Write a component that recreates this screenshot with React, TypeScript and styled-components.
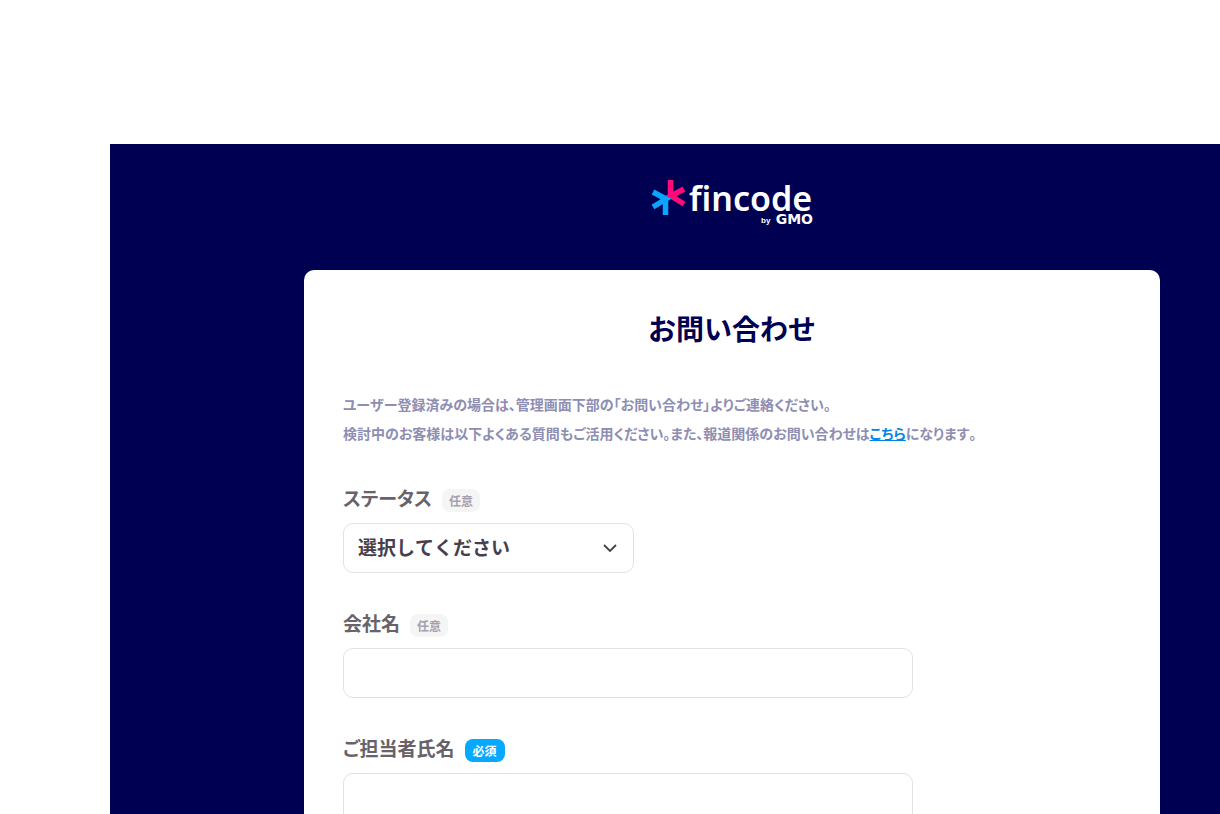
import React from "react";
import styled, { createGlobalStyle } from "styled-components";

const GlobalStyle = createGlobalStyle`
  *, *::before, *::after { box-sizing: border-box; }
  body {
    margin: 0;
    background: #fff;
    font-family: "Noto Sans CJK JP", sans-serif;
    font-feature-settings: "palt";
    font-kerning: none;
    font-weight: 700;
    color: #68626a;
  }
  #root { overflow: hidden; height: 100vh; }
`;

const Page = styled.div`
  padding: 144px 0 0 110px;
`;

const Panel = styled.main`
  display: flex;
  flex-direction: column;
  align-items: stretch;
  padding: 34px 60px 60px 194px;
  background: #000053;
`;

const Header = styled.header`
  display: flex;
  justify-content: center;
  margin-bottom: 40px;
`;

const LogoLink = styled.a`
  display: block;
  line-height: 0;
`;

const LogoSvg = styled.svg`
  overflow: visible;
`;

const Card = styled.section`
  padding: 36px 39px 60px;
  background: #fff;
  border-radius: 10px;
`;

const Title = styled.h1`
  margin: 0 0 40px;
  font-size: 28px;
  line-height: 44px;
  font-weight: 700;
  font-feature-settings: normal;
  text-align: center;
  color: #000053;
`;

const Lead = styled.p`
  margin: 0 0 35px;
  font-size: 14px;
  line-height: 29px;
  color: #8e8eb3;
`;

const TextLink = styled.a`
  color: #0483e6;
  text-decoration: underline;
`;

const Form = styled.form`
  display: flex;
  flex-direction: column;
  gap: 35px;
`;

const Field = styled.div`
  display: flex;
  flex-direction: column;
  gap: 10px;
`;

const FieldHead = styled.div`
  display: flex;
  align-items: center;
  gap: 10px;
  height: 30px;
`;

const Label = styled.label`
  font-size: 19px;
  line-height: 30px;
`;

const Badge = styled.span<{ $required?: boolean }>`
  margin-top: 4px;
  padding: 0 ${(p) => (p.$required ? 8 : 7)}px;
  border-radius: 8px;
  font-size: 12px;
  line-height: 23px;
  color: ${(p) => (p.$required ? "#fff" : "#a79fae")};
  background: ${(p) => (p.$required ? "#05a9ff" : "#f5f5f5")};
`;

const TextInput = styled.input`
  width: 100%;
  max-width: 570px;
  height: 50px;
  padding: 0 14px;
  border: 1px solid #e2e2e4;
  border-radius: 10px;
  background: #fff;
  font: inherit;
  font-size: 19px;
  color: #46404e;
`;

const SelectBox = styled.div`
  position: relative;
  width: 100%;
  max-width: 291px;
`;

const Select = styled.select`
  display: block;
  width: 100%;
  height: 50px;
  padding: 0 40px 4px 14px;
  border: 1px solid #e2e2e4;
  border-radius: 10px;
  background: #fff;
  appearance: none;
  font: inherit;
  font-size: 19px;
  font-feature-settings: normal;
  color: #46404e;
`;

const Chevron = styled.svg`
  position: absolute;
  top: 21px;
  right: 17px;
  pointer-events: none;
`;

const Logo = () => (
  <LogoSvg width="162" height="52" viewBox="0 0 162 52" role="img" aria-label="fincode by GMO">
    <path d="M19.500 2V20M33 11L20 18L33 26" fill="none" stroke="#ff0a78" strokeWidth="5.500" />
    <path d="M14.500 37V20M2 14L15 21L2 29" fill="none" stroke="#0aa5ff" strokeWidth="5.500" />
    <text x="38" y="33" fontFamily="Noto Sans, sans-serif" fontSize="34" fontWeight="600" fill="#fff">fincode</text>
    <text x="162" y="46" textAnchor="end" fontFamily="DejaVu Sans, sans-serif" fontSize="14" fontWeight="700" fill="#fff">GMO</text>
    <text x="110" y="45" fontFamily="Liberation Sans, sans-serif" fontSize="8" fontWeight="700" fill="#fff">by</text>
  </LogoSvg>
);

export default function App() {
  return (
    <>
      <GlobalStyle />
      <Page>
        <Panel>
          <Header>
            <LogoLink href="#"><Logo /></LogoLink>
          </Header>
          <Card>
            <Title>お問い合わせ</Title>
            <Lead>
              ユーザー登録済みの場合は、管理画面下部の「お問い合わせ」よりご連絡ください。
              <br />
              検討中のお客様は以下よくある質問もご活用ください。また、報道関係のお問い合わせは<TextLink href="#">こちら</TextLink>になります。
            </Lead>
            <Form>
              <Field>
                <FieldHead>
                  <Label htmlFor="status">ステータス</Label>
                  <Badge>任意</Badge>
                </FieldHead>
                <SelectBox>
                  <Select id="status" defaultValue="">
                    <option value="">選択してください</option>
                  </Select>
                  <Chevron width="14" height="9" viewBox="0 0 14 9" aria-hidden="true">
                    <path d="M1 1L7 7L13 1" fill="none" stroke="#46404e" strokeWidth="1.800" />
                  </Chevron>
                </SelectBox>
              </Field>
              <Field>
                <FieldHead>
                  <Label htmlFor="company">会社名</Label>
                  <Badge>任意</Badge>
                </FieldHead>
                <TextInput id="company" type="text" />
              </Field>
              <Field>
                <FieldHead>
                  <Label htmlFor="person">ご担当者氏名</Label>
                  <Badge $required>必須</Badge>
                </FieldHead>
                <TextInput id="person" type="text" required />
              </Field>
            </Form>
          </Card>
        </Panel>
      </Page>
    </>
  );
}
